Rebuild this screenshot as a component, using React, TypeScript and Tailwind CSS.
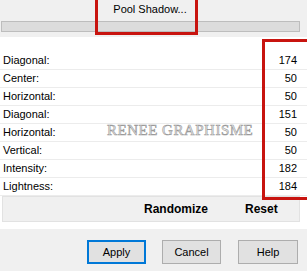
const rows: [string, number][] = [
  ['Diagonal:', 174],
  ['Center:', 50],
  ['Horizontal:', 50],
  ['Diagonal:', 151],
  ['Horizontal:', 50],
  ['Vertical:', 50],
  ['Intensity:', 182],
  ['Lightness:', 184],
]

export default function App() {
  return (
    <div className="relative w-[307px] h-[271px] overflow-hidden bg-[#f0f0f0] text-[11px] text-black font-['Liberation_Sans',Arial,sans-serif]">
      {/* preset header */}
      <div className="h-[37px] flex flex-col">
        <div className="w-[300px] h-[18px] flex items-center justify-center">Pool Shadow...</div>
        <div className="ml-[1px] mt-[3px] w-[299px] h-[11px] bg-[#dcdcdc] border border-[#bdbdbd]" />
      </div>

      {/* values panel */}
      <div className="bg-white pt-[15px] pb-[7px] flex flex-col">
        {rows.map(([label, v], i) => (
          <div key={i} className="h-[18px] flex items-center justify-between pl-[3px] pr-[10px] border-b border-[#ececec]">
            <span>{label}</span>
            <span>{v}</span>
          </div>
        ))}
        <div className="mx-[2px] w-[298px] h-[26px] bg-[#f0f0f0] border border-[#e2e2e2] flex items-center text-[12px] font-bold">
          <span className="ml-[141px]">Randomize</span>
          <span className="ml-[37px]">Reset</span>
        </div>
      </div>

      {/* footer */}
      <div className="flex pt-[11px]">
        <button className="ml-[87px] w-[59px] h-[24px] bg-[#e1e1e1] border-2 border-[#0078d7]">Apply</button>
        <button className="ml-[16px] w-[59px] h-[24px] bg-[#e1e1e1] border border-[#adadad]">Cancel</button>
        <button className="ml-[17px] w-[60px] h-[24px] bg-[#e1e1e1] border border-[#adadad]">Help</button>
      </div>

      {/* watermark */}
      <div className="absolute left-[107px] top-[119px] text-[15px] tracking-[0.5px] text-[#ececec] [-webkit-text-stroke:0.6px_#9a9a9a] font-['Liberation_Serif',serif] pointer-events-none">
        RENEE GRAPHISME
      </div>

      {/* red annotation boxes */}
      <div className="absolute left-[95px] top-[-4px] w-[103px] h-[39px] border-[3px] border-[#c8140f] pointer-events-none" />
      <div className="absolute left-[262px] top-[39px] w-[60px] h-[161px] border-[3px] border-[#c8140f] pointer-events-none" />
    </div>
  )
}
